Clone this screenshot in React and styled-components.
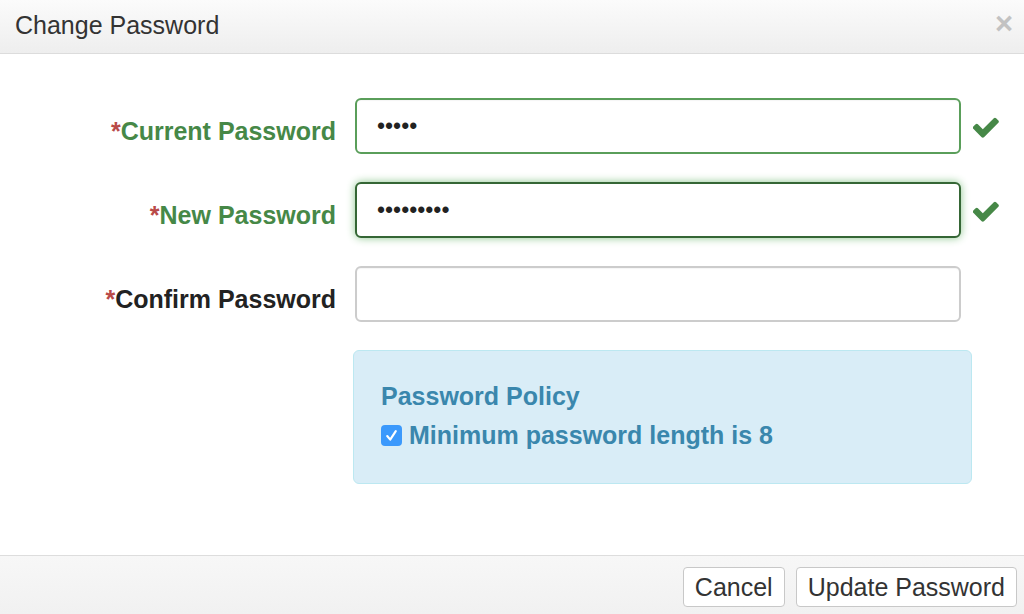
import styled, { createGlobalStyle } from 'styled-components';

const GlobalStyle = createGlobalStyle`
  html, body {
    margin: 0;
    padding: 0;
    background: #ffffff;
  }
  body {
    font-family: "Liberation Sans", Arial, Helvetica, sans-serif;
    color: #333333;
  }
`

const Modal = styled.div`
  width: 1024px;
  height: 614px;
  display: flex;
  flex-direction: column;
  overflow: hidden;
  background: #ffffff;
`

const Header = styled.div`
  height: 54px;
  box-sizing: border-box;
  padding: 11px 11px 0 15px;
  border-bottom: 1px solid #dcdcdc;
  background: linear-gradient(to bottom, #fbfbfb, #eeeeee);
  display: flex;
  align-items: flex-start;
  justify-content: space-between;
`

const Title = styled.h3`
  margin: 0;
  font-size: 25px;
  line-height: 28px;
  font-weight: 400;
  color: #333333;
`

const Close = styled.button`
  border: 0;
  background: none;
  padding: 0;
  margin-top: -3px;
  font-family: "Liberation Sans", Arial, sans-serif;
  font-size: 31px;
  line-height: 31px;
  font-weight: 700;
  color: #c2c2c2;
  cursor: pointer;
`

const Body = styled.div`
  flex: 1;
  padding-top: 44px;
  display: flex;
  flex-direction: column;
`

const Row = styled.div`
  display: grid;
  grid-template-columns: 336px 606px 26px;
  column-gap: 19px;
  height: 56px;
  margin-bottom: 28px;
  & > :nth-child(3) {
    margin-left: -7px;
  }
`

const Label = styled.label`
  text-align: right;
  padding-top: 19px;
  font-size: 25px;
  line-height: 28px;
  font-weight: 700;
  color: ${(p) => (p.$ok ? '#468847' : '#222222')};
  white-space: nowrap;
`

const Star = styled.span`
  color: #b94a48;
`

const Input = styled.input`
  box-sizing: border-box;
  width: 606px;
  height: 56px;
  padding: 0 20px;
  font-family: "Liberation Sans", Arial, sans-serif;
  font-size: 23px;
  color: #222222;
  background: #ffffff;
  border-radius: 6px;
  outline: none;
  border: 2px solid ${(p) => (p.$state === 'focus' ? '#356635' : p.$state === 'ok' ? '#5a9e5a' : '#cccccc')};
  box-shadow: ${(p) => (p.$state === 'focus' ? '0 0 9px #8cc68d' : 'inset 0 1px 1px rgba(0,0,0,0.04)')};
`

const IconCell = styled.div`
  display: flex;
  align-items: center;
  padding-top: 5px;
  color: #468847;
`

const Policy = styled.div`
  box-sizing: border-box;
  margin-left: 353px;
  width: 619px;
  height: 134px;
  padding: 31px 27px 0;
  background: #d9edf7;
  border: 1px solid #bce8f1;
  border-radius: 6px;
  color: #3a87ad;
  font-weight: 700;
  font-size: 25px;
  line-height: 28px;
`

const PolicyTitle = styled.div`
  margin-bottom: 11px;
`

const PolicyItem = styled.div`
  display: flex;
  align-items: center;
  gap: 7px;
`

const Box = styled.span`
  width: 21px;
  height: 21px;
  border-radius: 4px;
  background: #3b99fc;
  display: flex;
  align-items: center;
  justify-content: center;
`

const Footer = styled.div`
  height: 59px;
  box-sizing: border-box;
  border-top: 1px solid #dddddd;
  background: linear-gradient(to bottom, #f7f7f7, #f1f1f1);
  padding: 11px 7px 0 0;
  display: flex;
  justify-content: flex-end;
  align-items: flex-start;
  gap: 11px;
`

const Button = styled.button`
  height: 40px;
  padding: 0 11px;
  background: #ffffff;
  border: 1px solid #c8c8c8;
  border-radius: 4px;
  font-family: "Liberation Sans", Arial, sans-serif;
  font-size: 25px;
  color: #333333;
  cursor: pointer;
`

const Check = () => (
  <svg width="26" height="23" viewBox="130 400 1550 1150" fill="#468847">
    <path d="M1671 566q0 40-28 68l-724 724-136 136q-28 28-68 28t-68-28l-136-136-362-362q-28-28-28-68t28-68l136-136q28-28 68-28t68 28l294 295 656-657q28-28 68-28t68 28l136 136q28 28 28 68z" />
  </svg>
)

const fields = [
  { label: 'Current Password', value: '12345', state: 'ok' },
  { label: 'New Password', value: '123456789', state: 'focus' },
  { label: 'Confirm Password', value: '', state: '' },
]

const App = () => {
  return (
    <Modal>
      <GlobalStyle />
      <Header>
        <Title>Change Password</Title>
        <Close>×</Close>
      </Header>
      <Body>
        {fields.map((f) => (
          <Row key={f.label}>
            <Label $ok={!!f.state}>
              <Star>*</Star>
              {f.label}
            </Label>
            <Input type="password" defaultValue={f.value} $state={f.state} />
            <IconCell>{f.state && <Check />}</IconCell>
          </Row>
        ))}
        <Policy>
          <PolicyTitle>Password Policy</PolicyTitle>
          <PolicyItem>
            <Box>
              <svg width="15" height="15" viewBox="0 0 14 14">
                <path d="M3 7.5 L5.8 10.8 L11 3" fill="none" stroke="#fff" strokeWidth="2" strokeLinecap="round" strokeLinejoin="round" />
              </svg>
            </Box>
            Minimum password length is 8
          </PolicyItem>
        </Policy>
      </Body>
      <Footer>
        <Button>Cancel</Button>
        <Button>Update Password</Button>
      </Footer>
    </Modal>
  )
}

export default App;
